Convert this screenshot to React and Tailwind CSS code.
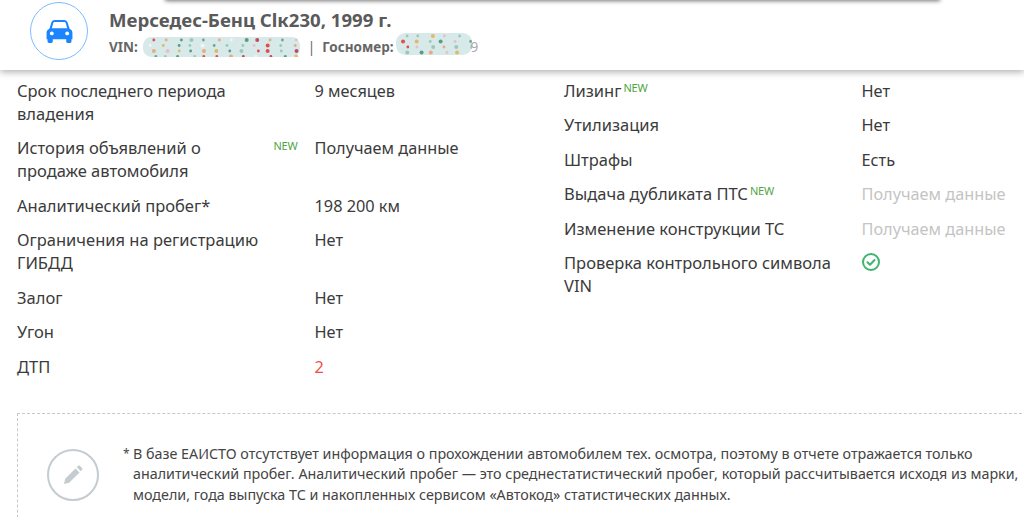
import React from "react";

const font = { fontFamily: '"Noto Sans", "Open Sans", sans-serif' };
const dotColors = ["#3f8f6f", "#b8304f", "#e8a070", "#e9b8c0", "#8fc4ae", "#e83030", "#f4f8f8", "#5a9a85", "#e0b050", "#8fc4ae", "#e9b8c0"];

function Blur({ w, h, seed }) {
  const dots = [];
  let s = seed;
  const rnd = () => { s = (s * 9301 + 49297) % 233280; return s / 233280; };
  for (let y = 3; y < h; y += 5.5) {
    for (let x = 5 + (y % 4); x < w - 3; x += 13) {
      const c = dotColors[Math.floor(rnd() * dotColors.length)];
      dots.push(<circle key={x + "-" + y} cx={x + rnd() * 5} cy={y} r={rnd() > 0.65 ? 2 : 1.4} fill={c} opacity="0.85" />);
    }
  }
  return (
    <svg width={w} height={h} viewBox={`0 0 ${w} ${h}`} className="block shrink-0">
      <rect x="0" y="0" width={w} height={h} rx={h / 2.4} fill="#d8e9ea" />
      {dots}
    </svg>
  );
}

function New({ gap = "" }) {
  return <span className={`text-[11px] leading-none text-[#4fa544] relative -top-[5px] tracking-[-0.2px] ${gap}`}>NEW</span>;
}

function Row({ label, lines, value, valueClass = "", badge, farBadge, icon }) {
  return (
    <div className="flex mb-[11.500px] leading-[23px]">
      <div className="w-[297.500px] shrink-0 relative -top-[1px] text-[16.500px]">
        {lines ? lines.map((l) => <div key={l}>{l}</div>) : label}
        {badge && <New gap="ml-[2px]" />}
        {farBadge && <span className="absolute right-[17px] top-[-2px] text-[11px] tracking-[-0.2px] text-[#4fa544]">NEW</span>}
      </div>
      <div className={`text-[16.300px] ${valueClass}`}>{icon || value}</div>
    </div>
  );
}

export default function App() {
  return (
    <div style={font} className="w-[1024px] h-[517px] overflow-hidden bg-white text-[#3b3b3b] relative">
      <div className="absolute z-20 left-[165px] w-[775px] -top-[10px] h-[10px] bg-white shadow-[0_1px_4px_rgba(0,0,0,0.55)]" />
      <div className="h-[70px] relative z-10 bg-white shadow-[0_2px_7px_rgba(0,0,0,0.32)] flex items-start pl-[30px] pt-[2px]">
        <div className="w-[58px] h-[58px] rounded-full border border-[#7dbcff] flex items-center justify-center shrink-0">
          <svg width="27" height="23" viewBox="0 0 28 24" fill="#1a85ff">
            <path d="M5.500 2.500C6 1 7.200 0 9 0h10c1.800 0 3 1 3.500 2.500L24.500 9c1.800.7 3 2.200 3 4.200V20h-1v2.500a1.500 1.500 0 0 1-1.500 1.500h-2.500a1.500 1.500 0 0 1-1.500-1.500V20H7v2.500A1.500 1.500 0 0 1 5.500 24H3a1.500 1.500 0 0 1-1.500-1.500V20h-1v-6.800c0-2 1.200-3.500 3-4.200z" />
            <path d="M7.500 3.200 6 8.500h16l-1.500-5.300c-.2-.7-.7-1.200-1.500-1.200H9c-.8 0-1.300.5-1.500 1.200z" fill="#fff" />
            <circle cx="6" cy="14" r="2" fill="#fff" />
            <circle cx="22" cy="14" r="2" fill="#fff" />
          </svg>
        </div>
        <div className="ml-[21px] text-[#5a5a5a]">
          <div className="text-[18.600px] font-bold leading-[24px] mt-[6px]">Мерседес-Бенц Clк230, 1999 г.</div>
          <div className="flex items-center text-[13.500px] font-bold leading-[20px] mt-[5px] text-[#666]">
            <span>VIN:</span>
            <span className="ml-[5px]"><Blur w={157} h={20} seed={7} /></span>
            <span className="ml-[8px] mr-[7px] font-normal">|</span>
            <span>Госномер:</span>
            <span className="ml-[2px] -mt-[6px]"><Blur w={76} h={22} seed={31} /></span>
            <span className="font-normal text-[#aaa] -ml-[1px]">9</span>
          </div>
        </div>
      </div>

      <div className="grid grid-cols-[547px_460px] pl-[17px] pt-[9.800px]">
        <div>
          <Row lines={["Срок последнего периода", "владения"]} value="9 месяцев" />
          <Row lines={["История объявлений о", "продаже автомобиля"]} value="Получаем данные" farBadge />
          <Row label="Аналитический пробег*" value="198 200 км" />
          <Row lines={["Ограничения на регистрацию", "ГИБДД"]} value="Нет" />
          <Row label="Залог" value="Нет" />
          <Row label="Угон" value="Нет" />
          <Row label="ДТП" value="2" valueClass="text-[#f0504a]" />
        </div>
        <div>
          <Row label="Лизинг" value="Нет" badge />
          <Row label="Утилизация" value="Нет" />
          <Row label="Штрафы" value="Есть" />
          <Row label="Выдача дубликата ПТС" value="Получаем данные" valueClass="text-[#c4c4c4]" badge />
          <Row label="Изменение конструкции ТС" value="Получаем данные" valueClass="text-[#c4c4c4]" />
          <Row
            lines={["Проверка контрольного символа", "VIN"]}
            icon={
              <svg width="18" height="18" viewBox="0 0 18 18" fill="none" stroke="#3fb56f" strokeWidth="2" strokeLinecap="round" strokeLinejoin="round" className="mt-[1px]">
                <circle cx="9" cy="9" r="8" />
                <path d="M5.500 9.300 8 11.700l4.500-4.700" />
              </svg>
            }
          />
        </div>
      </div>

      <div className="absolute left-[17px] top-[413px] w-[1030px] h-[120px] border border-dashed border-[#c8c8c8] flex">
        <div className="w-[52px] h-[52px] ml-[29px] mt-[35px] rounded-full border-2 border-[#c5ccd0] flex items-center justify-center shrink-0">
          <svg width="20" height="20" viewBox="0 0 20 20" fill="#c5ccd0">
            <path d="M1 19l1.200-5.200L12.500 3.500l4 4L6.200 17.800z" />
            <path d="M13.700 2.300 15 1c.6-.6 1.400-.6 2 0l2 2c.6.6.6 1.400 0 2l-1.300 1.300z" />
          </svg>
        </div>
        <div className="ml-[24px] mt-[29.500px] w-[900px] text-[14.300px] leading-[20.800px] text-[#444] pl-[10px] relative">
          <span className="absolute left-0 top-0 text-[12px]">*</span>
          <div>В базе ЕАИСТО отсутствует информация о прохождении автомобилем тех. осмотра, поэтому в отчете отражается только</div>
          <div>аналитический пробег. Аналитический пробег — это среднестатистический пробег, который рассчитывается исходя из марки,</div>
          <div>модели, года выпуска ТС и накопленных сервисом «Автокод» статистических данных.</div>
        </div>
      </div>
    </div>
  );
}
